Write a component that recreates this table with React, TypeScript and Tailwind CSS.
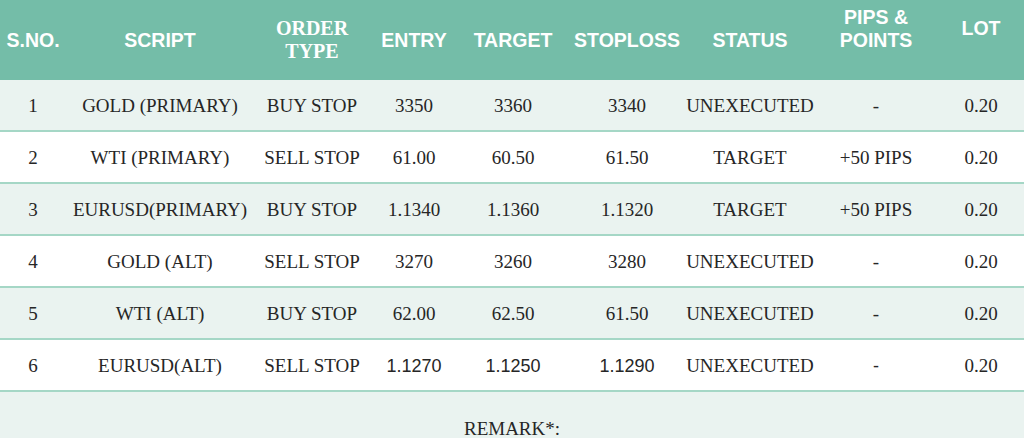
import React from "react";

const cols = "grid grid-cols-[66px_188px_116px_88px_110px_118px_128px_124px_86px]";

type Row = { v: string[]; sans?: number[]; alt: boolean };

const rows: Row[] = [
  { v: ["1", "GOLD (PRIMARY)", "BUY STOP", "3350", "3360", "3340", "UNEXECUTED", "-", "0.20"], alt: true },
  { v: ["2", "WTI (PRIMARY)", "SELL STOP", "61.00", "60.50", "61.50", "TARGET", "+50 PIPS", "0.20"], alt: false },
  { v: ["3", "EURUSD(PRIMARY)", "BUY STOP", "1.1340", "1.1360", "1.1320", "TARGET", "+50 PIPS", "0.20"], alt: true },
  { v: ["4", "GOLD (ALT)", "SELL STOP", "3270", "3260", "3280", "UNEXECUTED", "-", "0.20"], alt: false },
  { v: ["5", "WTI (ALT)", "BUY STOP", "62.00", "62.50", "61.50", "UNEXECUTED", "-", "0.20"], alt: true },
  { v: ["6", "EURUSD(ALT)", "SELL STOP", "1.1270", "1.1250", "1.1290", "UNEXECUTED", "-", "0.20"], sans: [3, 4, 5, 7], alt: false },
];

const sans = "font-['Liberation_Sans',Arial,sans-serif]";
const serif = "font-['Liberation_Serif','Times_New_Roman',serif]";

export default function App() {
  return (
    <div className="w-[1024px] h-[438px] overflow-hidden bg-white text-[#262626]">
      <div className={`${cols} h-[80px] bg-[#74bda8] text-white font-bold text-[19.5px] leading-[23px] ${sans}`}>
        <div className="flex items-center justify-center">S.NO.</div>
        <div className="flex items-center justify-center">SCRIPT</div>
        <div className={`flex flex-col items-center justify-center ${serif} text-[20px]`}>
          <span>ORDER</span>
          <span>TYPE</span>
        </div>
        <div className="flex items-center justify-center">ENTRY</div>
        <div className="flex items-center justify-center">TARGET</div>
        <div className="flex items-center justify-center">STOPLOSS</div>
        <div className="flex items-center justify-center">STATUS</div>
        <div className="flex flex-col items-center justify-center pb-[23px]">
          <span>PIPS &amp;</span>
          <span>POINTS</span>
        </div>
        <div className="flex items-center justify-center pb-[23px]">LOT</div>
      </div>
      {rows.map((r, i) => (
        <div
          key={i}
          className={`${cols} h-[52px] pt-[3px] border-b-2 border-[#a5d7c6] text-[19px] ${serif} ${r.alt ? "bg-[#eaf3f0]" : "bg-white"}`}
        >
          {r.v.map((c, j) => (
            <div
              key={j}
              className={`flex items-center justify-center whitespace-nowrap ${r.sans?.includes(j) ? `${sans} text-[18px]` : ""}`}
            >
              {c}
            </div>
          ))}
        </div>
      ))}
      <div className={`h-[60px] bg-[#eaf3f0] flex justify-center pt-[25px] text-[19px] leading-[24px] ${serif}`}>
        REMARK*:
      </div>
    </div>
  );
}
